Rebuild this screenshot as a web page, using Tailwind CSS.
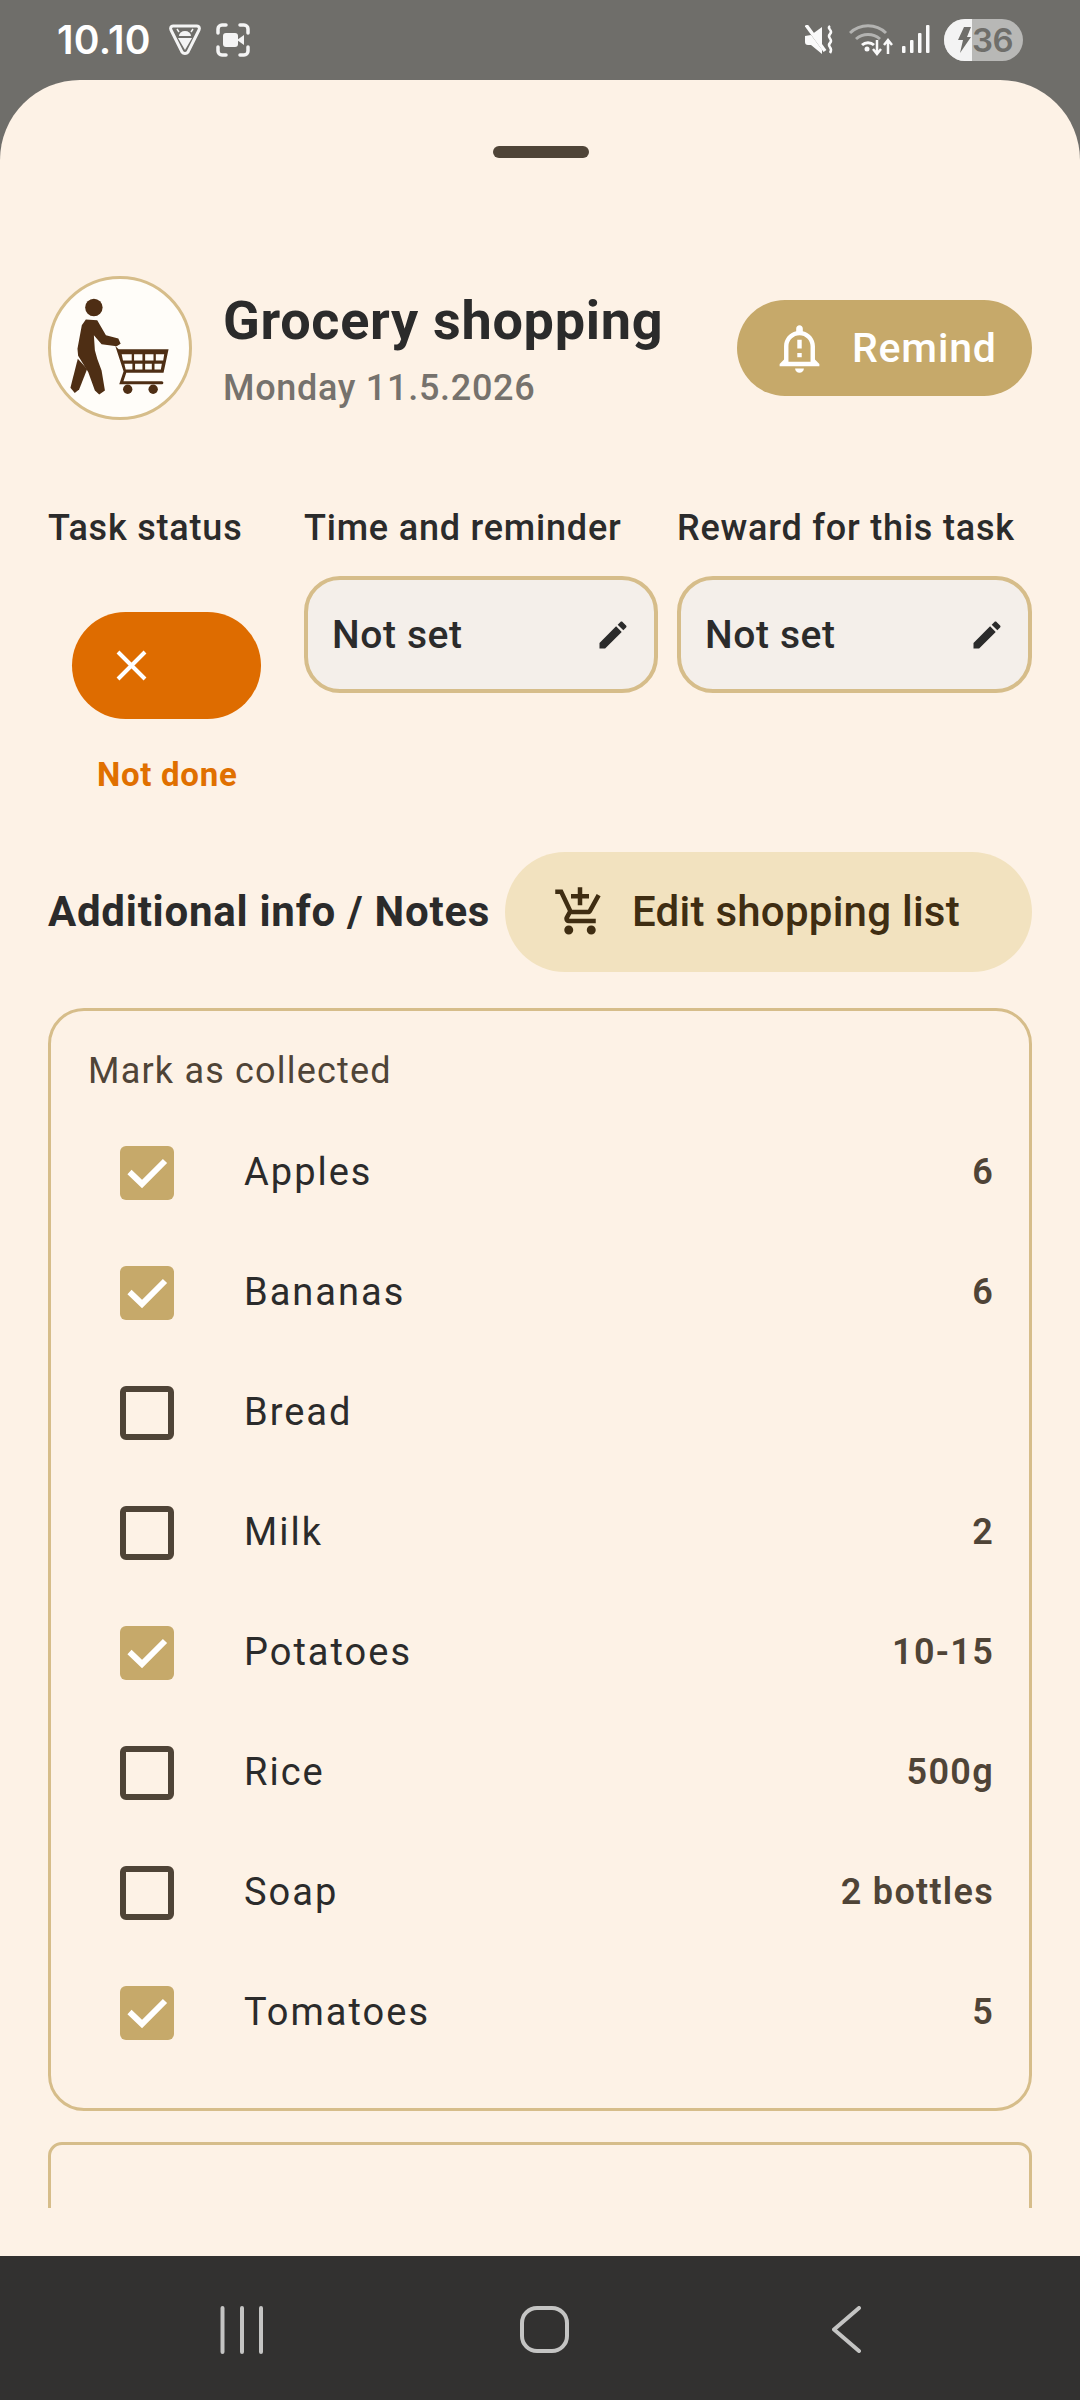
<!DOCTYPE html>
<html>
<head>
<meta charset="utf-8">
<script src="https://cdn.jsdelivr.net/npm/@tailwindcss/browser@4"></script>
</head>
<body class="bg-[#6f6e6a]">
<div class="w-[1080px] h-[2400px] flex flex-col overflow-hidden font-['Roboto',sans-serif] bg-[#6f6e6a]">
  <!-- status bar -->
  <div class="h-[80px] shrink-0 flex items-center justify-between pl-[57px] pr-[57px] text-white">
    <div class="flex items-center">
      <span class="text-[39px] leading-[50px] font-semibold font-['Inter',sans-serif] tracking-[0.3px] w-[111px]">10.10</span>
      <svg class="w-[34px] h-[34px] mr-[14px]" viewBox="0 0 34 34" fill="none"><path d="M5 3h24c2 0 3 2 2 4L20 29c-1.500 2-4.500 2-6 0L3 7C2 5 3 3 5 3z" stroke="#f4f4f4" stroke-width="3"/><path d="M11 13a6 5 0 0 1 12 0z" fill="#f4f4f4"/><path d="M11 9l-2-3M23 9l2-3" stroke="#f4f4f4" stroke-width="1.500"/><path d="M10 15h14l-7 12z" fill="#f4f4f4"/></svg>
      <svg class="w-[34px] h-[34px]" viewBox="0 0 34 34" fill="none"><path d="M2 10V6a4 4 0 0 1 4-4h4M24 2h4a4 4 0 0 1 4 4v4M2 24v4a4 4 0 0 0 4 4h4M24 32h4a4 4 0 0 0 4-4v-4" stroke="#f4f4f4" stroke-width="3.500" stroke-linecap="round"/><rect x="7" y="10" width="15" height="14" rx="3" fill="#f4f4f4"/><path d="M21 17l7-5v10z" fill="#f4f4f4"/></svg>
    </div>
    <div class="flex items-center">
      <svg class="w-[30px] h-[30px] mr-[14px]" viewBox="0 0 30 30" fill="none"><path d="M0 11l6-1 11-8v27L6 20H3c-2 0-3-1-3-3z" fill="#fafafa"/><path d="M1 1l20 27" stroke="#6f6e6a" stroke-width="2.500"/><path d="M1 0l19 26" stroke="#fafafa" stroke-width="3.500"/><path d="M25 1c-4 3 4 4 0 8s4 5 0 9 4 4 0 10" stroke="#fafafa" stroke-width="2.500"/></svg>
      <svg class="w-[44px] h-[34px] mr-[9px]" viewBox="0 0 44 34" fill="none"><path d="M1 10a26 26 0 0 1 36 0" stroke="#b3b3b1" stroke-width="3"/><path d="M7 16a18 18 0 0 1 24 0" stroke="#b3b3b1" stroke-width="3"/><path d="M13 22a9 9 0 0 1 12 0" stroke="#fafafa" stroke-width="3"/><circle cx="18" cy="26" r="2.500" fill="#fafafa"/><path d="M28 17v14m-4-5l4 5 4-5" stroke="#fafafa" stroke-width="2.500"/><path d="M39 31V18m-4 4l4-5 4 5" stroke="#fafafa" stroke-width="2.500"/></svg>
      <svg class="w-[28px] h-[30px] mr-[14px]" viewBox="0 0 28 30"><rect x="0" y="21" width="3.500" height="7" rx="1" fill="#fafafa"/><rect x="8" y="15" width="3.500" height="13" rx="1" fill="#fafafa"/><rect x="16" y="8" width="3.500" height="20" rx="1" fill="#fafafa"/><rect x="24" y="0" width="3.500" height="28" rx="1" fill="#fafafa"/></svg>
      <div class="w-[79px] h-[42px] rounded-full overflow-hidden flex bg-[#b8b8b6]">
        <div class="w-[28px] bg-[#f3f3f3] flex items-center justify-end shrink-0 pr-[1px]">
          <svg class="w-[14px] h-[28px]" viewBox="0 0 14 28"><path d="M7 1h7L10 11h4L3 27l3-13H1z" fill="#6f6e6a"/></svg>
        </div>
        <span class="text-[#6f6e6a] text-[33px] leading-[42px] font-semibold font-['Inter',sans-serif] tracking-[-0.5px]">36</span>
      </div>
    </div>
  </div>

  <!-- sheet -->
  <div class="flex-1 min-h-0 bg-[#fdf2e6] rounded-t-[80px] flex flex-col overflow-hidden">
    <div class="h-[12px] w-[96px] rounded-full bg-[#4f4437] self-center ml-[1px] mt-[66px] shrink-0"></div>

    <div class="mx-[48px] mt-[118px] flex items-center shrink-0 h-[144px]">
      <div class="w-[144px] h-[144px] rounded-full border-[3px] border-[#d6bd8a] bg-[#fffdf9] shrink-0 overflow-hidden">
        <svg class="w-[138px] h-[138px]" viewBox="94 87 412 412">
          <circle cx="222" cy="172" r="26" fill="#4e2e14"/>
          <path d="M198 208L232 210L258 255L295 265L302 280L290 288L245 282L222 255L225 300L232 325L245 360L255 420L238 432L225 420L205 365L175 316L173 295L186 225z" fill="#4e2e14"/>
          <path d="M174 325L202 356L178 417L165 427L152 412z" fill="#4e2e14"/>
          <path d="M286 287L296 297H445L430 367H312z" fill="#4e2e14"/>
          <path d="M305 312h30v18h-26zM342 312h25v18h-25zM375 312h25v18h-25zM407 312h25l-3 18h-22zM313 340h24v17h-20zM345 340h22v17h-22zM375 340h20v17h-20zM403 340h22l-3 17h-19z" fill="#fffdf9"/>
          <path d="M314 367L304 397H425" stroke="#4e2e14" stroke-width="9" fill="none" stroke-linecap="round"/>
          <circle cx="323" cy="416" r="14" fill="#4e2e14"/>
          <circle cx="399" cy="416" r="14" fill="#4e2e14"/>
        </svg>
      </div>
      <div class="ml-[31px] pt-[4px] flex flex-col w-[514px] shrink-0">
        <span class="text-[54px] leading-[62px] font-bold tracking-[0.7px] text-[#2b2b2b] whitespace-nowrap">Grocery shopping</span>
        <span class="text-[36px] leading-[46px] font-medium text-[#76726d] tracking-[0.7px] whitespace-nowrap mt-[13px]">Monday 11.5.2026</span>
      </div>
      <div class="w-[295px] h-[96px] rounded-full bg-[#c6a96a] flex items-center shrink-0 text-white relative">
        <svg class="ml-[36px] w-[53px] h-[53px] shrink-0" viewBox="0 0 24 24" fill="#fff"><path d="M10.010 21.010c0 1.100.890 1.990 1.990 1.990s1.990-.890 1.990-1.990h-3.980zM12 6c2.760 0 5 2.240 5 5v7H7v-7c0-2.760 2.240-5 5-5zm0-4.500c-.830 0-1.500.670-1.500 1.500v1.170C7.360 4.850 5 7.650 5 11v6l-2 2v1h18v-1l-2-2v-6c0-3.350-2.360-6.150-5.500-6.830V3c0-.830-.670-1.500-1.500-1.500zM11 8h2v4h-2zm0 6h2v2h-2z"/></svg>
        <span class="ml-[26px] text-[41px] leading-[50px] font-medium tracking-[0.8px]">Remind</span>
      </div>
    </div>

    <div class="mx-[48px] mt-[86px] shrink-0 grid grid-cols-[237px_354px_355px] gap-x-[19px]">
      <div class="flex flex-col">
        <span class="text-[36px] leading-[44px] font-medium tracking-[0.8px] text-[#2b2b2b] whitespace-nowrap h-[70px]">Task status</span>
        <div class="mt-[36px] ml-[24px] w-[189px] h-[107px] rounded-full bg-[#de6c00] flex items-center">
          <svg class="ml-[44px] w-[31px] h-[31px]" viewBox="0 0 31 31"><path d="M2 2L29 29M29 2L2 29" stroke="#fff" stroke-width="4"/></svg>
        </div>
        <span class="mt-[36px] ml-[49px] text-[33px] leading-[40px] font-bold tracking-[0.7px] text-[#e07000] whitespace-nowrap">Not done</span>
      </div>
      <div class="flex flex-col">
        <span class="text-[36px] leading-[44px] font-medium tracking-[0.8px] text-[#2b2b2b] whitespace-nowrap h-[70px]">Time and reminder</span>
        <div class="h-[117px] rounded-[36px] border-[4px] border-[#d6bd8a] bg-[#f4efea] flex items-center justify-between pl-[24px] pr-[23px]">
          <span class="text-[39px] leading-[48px] font-medium tracking-[0.6px] text-[#2b2b2b]">Not set</span>
          <svg class="w-[36px] h-[36px]" viewBox="0 0 24 24" fill="#2b2b2b"><path d="M3 17.250V21h3.750L17.810 9.940l-3.750-3.750L3 17.250zM20.710 7.040c.390-.390.390-1.020 0-1.410l-2.340-2.340c-.390-.390-1.020-.390-1.410 0l-1.830 1.830 3.750 3.750 1.830-1.830z"/></svg>
        </div>
      </div>
      <div class="flex flex-col">
        <span class="text-[36px] leading-[44px] font-medium tracking-[0.8px] text-[#2b2b2b] whitespace-nowrap h-[70px]">Reward for this task</span>
        <div class="h-[117px] rounded-[36px] border-[4px] border-[#d6bd8a] bg-[#f4efea] flex items-center justify-between pl-[24px] pr-[23px]">
          <span class="text-[39px] leading-[48px] font-medium tracking-[0.6px] text-[#2b2b2b]">Not set</span>
          <svg class="w-[36px] h-[36px]" viewBox="0 0 24 24" fill="#2b2b2b"><path d="M3 17.250V21h3.750L17.810 9.940l-3.750-3.750L3 17.250zM20.710 7.040c.390-.390.390-1.020 0-1.410l-2.340-2.340c-.390-.390-1.020-.390-1.410 0l-1.830 1.830 3.750 3.750 1.830-1.830z"/></svg>
        </div>
      </div>
    </div>

    <div class="mx-[48px] mt-[57px] flex items-center justify-between shrink-0 h-[120px]">
      <span class="text-[42px] leading-[52px] font-bold tracking-[0.75px] text-[#2b2b2b] whitespace-nowrap">Additional info / Notes</span>
      <div class="w-[527px] h-[120px] rounded-full bg-[#f2e2bf] flex items-center shrink-0">
        <svg class="ml-[48px] w-[54px] h-[54px] shrink-0" viewBox="0 0 24 24" fill="#3f2d12"><path d="M11 9h2V6h3V4h-3V1h-2v3H8v2h3v3zm-4 9c-1.100 0-1.990.900-1.990 2S5.900 22 7 22s2-.900 2-2-.900-2-2-2zm10 0c-1.100 0-1.990.900-1.990 2s.890 2 1.990 2 2-.900 2-2-.900-2-2-2zm-9.830-3.250l.030-.120.900-1.630h7.450c.750 0 1.410-.410 1.750-1.030l3.860-7.010L19.420 4h-.010l-1.100 2-2.760 5H8.530l-.130-.270L6.160 6l-.950-2-.940-2H1v2h2l3.600 7.590-1.350 2.450c-.160.280-.250.610-.250.960 0 1.100.900 2 2 2h12v-2H7.420c-.130 0-.250-.110-.250-.250z"/></svg>
        <span class="ml-[25px] text-[42px] leading-[52px] font-medium tracking-[0.25px] text-[#3f2d12] whitespace-nowrap">Edit shopping list</span>
      </div>
    </div>

    <div class="mx-[48px] mt-[36px] h-[1103px] shrink-0 rounded-[36px] border-[3px] border-[#d6bd8a] flex flex-col">
      <span class="ml-[37px] mt-[38px] text-[36px] leading-[44px] text-[#4f4437] tracking-[1.2px] whitespace-nowrap">Mark as collected</span>
      <div class="mt-[20px] flex flex-col">
        <div class="h-[120px] flex items-center pl-[69px] pr-[35px]">
          <div class="w-[54px] h-[54px] rounded-[6px] bg-[#c6a96a] shrink-0"><svg class="w-[54px] h-[54px]" viewBox="0 0 54 54" fill="none"><path d="M9.500 26L22 38L45 15" stroke="#fff" stroke-width="6"/></svg></div>
          <span class="ml-[70px] mb-[2px] flex-1 text-[38px] leading-[48px] tracking-[2px] text-[#2b2b2b]">Apples</span>
          <span class="mb-[2px] text-[36px] leading-[44px] font-semibold tracking-[1.3px] text-[#4f4437]">6</span>
        </div>
        <div class="h-[120px] flex items-center pl-[69px] pr-[35px]">
          <div class="w-[54px] h-[54px] rounded-[6px] bg-[#c6a96a] shrink-0"><svg class="w-[54px] h-[54px]" viewBox="0 0 54 54" fill="none"><path d="M9.500 26L22 38L45 15" stroke="#fff" stroke-width="6"/></svg></div>
          <span class="ml-[70px] mb-[2px] flex-1 text-[38px] leading-[48px] tracking-[2px] text-[#2b2b2b]">Bananas</span>
          <span class="mb-[2px] text-[36px] leading-[44px] font-semibold tracking-[1.3px] text-[#4f4437]">6</span>
        </div>
        <div class="h-[120px] flex items-center pl-[69px] pr-[35px]">
          <div class="w-[54px] h-[54px] rounded-[6px] border-[6px] border-[#4f4437] shrink-0"></div>
          <span class="ml-[70px] mb-[2px] flex-1 text-[38px] leading-[48px] tracking-[2px] text-[#2b2b2b]">Bread</span>
        </div>
        <div class="h-[120px] flex items-center pl-[69px] pr-[35px]">
          <div class="w-[54px] h-[54px] rounded-[6px] border-[6px] border-[#4f4437] shrink-0"></div>
          <span class="ml-[70px] mb-[2px] flex-1 text-[38px] leading-[48px] tracking-[2px] text-[#2b2b2b]">Milk</span>
          <span class="mb-[2px] text-[36px] leading-[44px] font-semibold tracking-[1.3px] text-[#4f4437]">2</span>
        </div>
        <div class="h-[120px] flex items-center pl-[69px] pr-[35px]">
          <div class="w-[54px] h-[54px] rounded-[6px] bg-[#c6a96a] shrink-0"><svg class="w-[54px] h-[54px]" viewBox="0 0 54 54" fill="none"><path d="M9.500 26L22 38L45 15" stroke="#fff" stroke-width="6"/></svg></div>
          <span class="ml-[70px] mb-[2px] flex-1 text-[38px] leading-[48px] tracking-[2px] text-[#2b2b2b]">Potatoes</span>
          <span class="mb-[2px] text-[36px] leading-[44px] font-semibold tracking-[1.3px] text-[#4f4437]">10-15</span>
        </div>
        <div class="h-[120px] flex items-center pl-[69px] pr-[35px]">
          <div class="w-[54px] h-[54px] rounded-[6px] border-[6px] border-[#4f4437] shrink-0"></div>
          <span class="ml-[70px] mb-[2px] flex-1 text-[38px] leading-[48px] tracking-[2px] text-[#2b2b2b]">Rice</span>
          <span class="mb-[2px] text-[36px] leading-[44px] font-semibold tracking-[1.3px] text-[#4f4437]">500g</span>
        </div>
        <div class="h-[120px] flex items-center pl-[69px] pr-[35px]">
          <div class="w-[54px] h-[54px] rounded-[6px] border-[6px] border-[#4f4437] shrink-0"></div>
          <span class="ml-[70px] mb-[2px] flex-1 text-[38px] leading-[48px] tracking-[2px] text-[#2b2b2b]">Soap</span>
          <span class="mb-[2px] text-[36px] leading-[44px] font-semibold tracking-[1.3px] text-[#4f4437]">2 bottles</span>
        </div>
        <div class="h-[120px] flex items-center pl-[69px] pr-[35px]">
          <div class="w-[54px] h-[54px] rounded-[6px] bg-[#c6a96a] shrink-0"><svg class="w-[54px] h-[54px]" viewBox="0 0 54 54" fill="none"><path d="M9.500 26L22 38L45 15" stroke="#fff" stroke-width="6"/></svg></div>
          <span class="ml-[70px] mb-[2px] flex-1 text-[38px] leading-[48px] tracking-[2px] text-[#2b2b2b]">Tomatoes</span>
          <span class="mb-[2px] text-[36px] leading-[44px] font-semibold tracking-[1.3px] text-[#4f4437]">5</span>
        </div>
      </div>
    </div>

    <div class="mx-[48px] mt-[31px] h-[66px] shrink-0 overflow-hidden">
      <div class="h-[120px] rounded-[14px] border-[3px] border-[#d6bd8a]"></div>
    </div>
  </div>

  <!-- nav bar -->
  <div class="h-[144px] shrink-0 bg-[#323130] relative">
    <svg class="absolute left-[219px] top-[50px] w-[46px] h-[48px]" viewBox="0 0 46 48" fill="none"><path d="M3.500 2v44M23 2v44M42 2v44" stroke="#c4c4c3" stroke-width="4" stroke-linecap="round"/></svg>
    <svg class="absolute left-[520px] top-[50px] w-[49px] h-[47px]" viewBox="0 0 49 47" fill="none"><rect x="2" y="2" width="45" height="43" rx="15" stroke="#c4c4c3" stroke-width="4"/></svg>
    <svg class="absolute left-[832px] top-[50px] w-[30px] h-[47px]" viewBox="0 0 30 47" fill="none"><path d="M27 2L2 23.500L27 45" stroke="#c4c4c3" stroke-width="4" stroke-linecap="round" stroke-linejoin="round"/></svg>
  </div>
</div>
</body>
</html>
